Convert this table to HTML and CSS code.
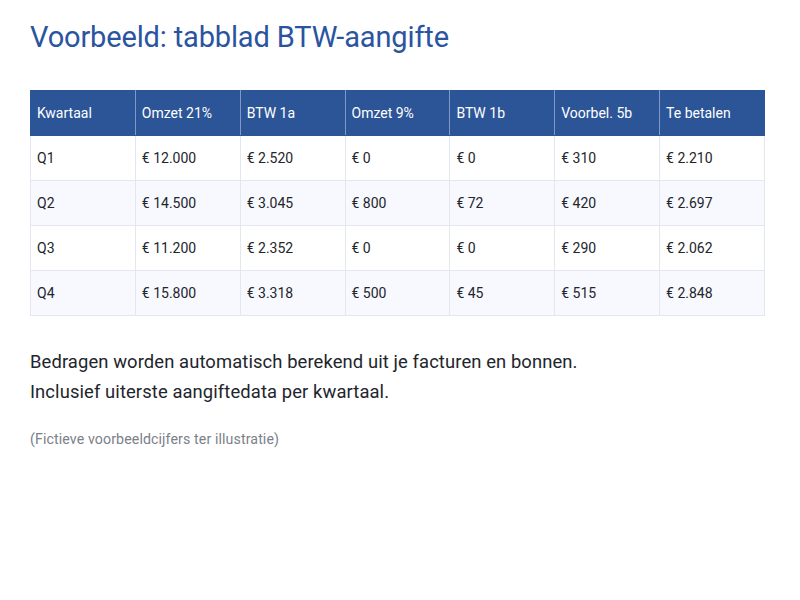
FILE: index.html
```html
<!DOCTYPE html>
<html lang="nl">
<head>
<meta charset="utf-8">
<title>Voorbeeld: tabblad BTW-aangifte</title>
<link rel="stylesheet" href="styles.css">
</head>
<body>
<main class="page">
  <h1 class="title">Voorbeeld: tabblad BTW-aangifte</h1>
  <table class="vat">
    <thead>
      <tr><th>Kwartaal</th><th>Omzet 21%</th><th>BTW 1a</th><th>Omzet 9%</th><th>BTW 1b</th><th>Voorbel. 5b</th><th>Te betalen</th></tr>
    </thead>
    <tbody>
      <tr><td>Q1</td><td>€ 12.000</td><td>€ 2.520</td><td>€ 0</td><td>€ 0</td><td>€ 310</td><td>€ 2.210</td></tr>
      <tr><td>Q2</td><td>€ 14.500</td><td>€ 3.045</td><td>€ 800</td><td>€ 72</td><td>€ 420</td><td>€ 2.697</td></tr>
      <tr><td>Q3</td><td>€ 11.200</td><td>€ 2.352</td><td>€ 0</td><td>€ 0</td><td>€ 290</td><td>€ 2.062</td></tr>
      <tr><td>Q4</td><td>€ 15.800</td><td>€ 3.318</td><td>€ 500</td><td>€ 45</td><td>€ 515</td><td>€ 2.848</td></tr>
    </tbody>
  </table>
  <p class="lead">Bedragen worden automatisch berekend uit je facturen en bonnen.<br>Inclusief uiterste aangiftedata per kwartaal.</p>
  <p class="note">(Fictieve voorbeeldcijfers ter illustratie)</p>
</main>
</body>
</html>
```
FILE: styles.css
```css
html, body { margin: 0; padding: 0; background: #fff; }
body { font-family: Roboto, "Liberation Sans", sans-serif; color: #22252c; }
.page { padding: 19px 35px 0 30px; }
.title { margin: 0; font-size: 29px; font-weight: 400; color: #2a54a0; line-height: 36px; letter-spacing: -0.15px; }
.vat { margin-top: 35px; width: 735px; border-collapse: collapse; table-layout: fixed; font-size: 14px; }
.vat th, .vat td { height: 44px; padding: 0 6px; text-align: left; font-weight: 400; border: 1px solid #e3e7f0; }
.vat th { background: #2c5597; color: #fff; border-color: #7f98c6; border-top-color: #2c5597; border-bottom-color: #2c5597; }
.vat th:first-child { border-left-color: #2c5597; }
.vat th:last-child { border-right-color: #2c5597; }
.vat td { color: #22252c; }
.vat tbody tr:nth-child(even) td { background: #f8f9fe; }
.lead { margin: 31px 0 0; font-size: 18.4px; line-height: 30px; letter-spacing: 0.1px; color: #22252c; }
.note { margin: 22px 0 0; font-size: 14.2px; line-height: 20px; letter-spacing: 0.1px; color: #7b7f88; }
```
